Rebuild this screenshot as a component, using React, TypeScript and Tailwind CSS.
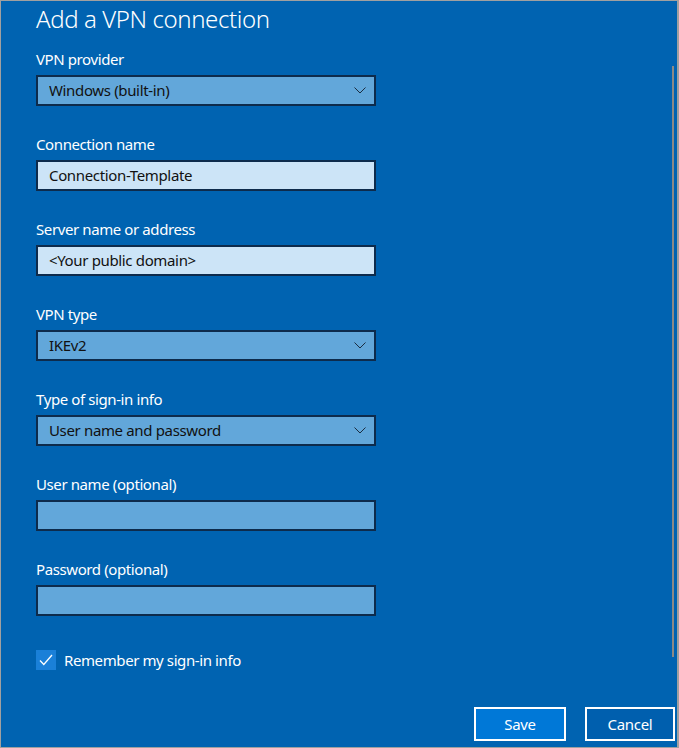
import React from 'react';

const font = { fontFamily: '"Noto Sans", "Open Sans", Arial, sans-serif' };

const Chevron: React.FC = () => (
  <svg width="12" height="7" viewBox="0 0 12 7" className="shrink-0 mr-[1px]">
    <polyline points="0.5,0.5 6,6 11.5,0.5" fill="none" stroke="#1b2d40" strokeWidth="1" />
  </svg>
);

const Field: React.FC<{ label: string; value?: string; kind: 'select' | 'text' | 'empty' }> = ({ label, value, kind }) => (
  <div className="flex flex-col">
    <div className="text-[15px] leading-[20px] tracking-[-0.4px] text-white">{label}</div>
    <div
      className={`mt-[6px] w-[340px] h-[31px] border-2 border-[#0d2b4c] flex items-center pl-[11px] pr-[7px] text-[15px] tracking-[-0.35px] text-[#111] ${
        kind === 'text' ? 'bg-[#cce4f7]' : 'bg-[#62a7da]'
      }`}
    >
      <span className="flex-1 truncate">{value}</span>
      {kind === 'select' && <Chevron />}
    </div>
  </div>
);

export default function App() {
  return (
    <div
      style={font}
      className="relative w-[679px] h-[748px] bg-[#0063b1] border-t border-l border-b border-r-2 border-[#a0a0a0] flex flex-col overflow-hidden"
    >
      <div className="pl-[35px] flex flex-col">
        <h1 className="text-[24px] leading-[36px] tracking-[-0.4px] font-light text-white">Add a VPN connection</h1>
        <div className="mt-[12px] flex flex-col gap-[28px]">
          <Field label="VPN provider" value="Windows (built-in)" kind="select" />
          <Field label="Connection name" value="Connection-Template" kind="text" />
          <Field label="Server name or address" value="<Your public domain>" kind="text" />
          <Field label="VPN type" value="IKEv2" kind="select" />
          <Field label="Type of sign-in info" value="User name and password" kind="select" />
          <Field label="User name (optional)" kind="empty" />
          <Field label="Password (optional)" kind="empty" />
        </div>
        <label className="mt-[33px] flex items-center gap-[8px] text-[15px] tracking-[-0.4px] text-white">
          <span className="w-[20px] h-[20px] bg-[#1a80d8] flex items-center justify-center">
            <svg width="14" height="12" viewBox="0 0 14 12">
              <polyline points="1,6.5 4.8,10.5 13,1" fill="none" stroke="white" strokeWidth="1.3" />
            </svg>
          </span>
          Remember my sign-in info
        </label>
      </div>

      <div className="mt-auto flex justify-end gap-[19px] pr-[2px] pb-[6px]">
        <button className="w-[92px] h-[34px] border-2 border-white bg-[#0078d7] text-white text-[15px] tracking-[-0.3px]">Save</button>
        <button className="w-[90px] h-[34px] border-2 border-white bg-[#005fae] text-white text-[15px] tracking-[-0.3px]">Cancel</button>
      </div>

      <div className="absolute left-[671px] top-[65px] w-[2px] h-[591px] bg-[#8c8a86]" />
    </div>
  );
}
